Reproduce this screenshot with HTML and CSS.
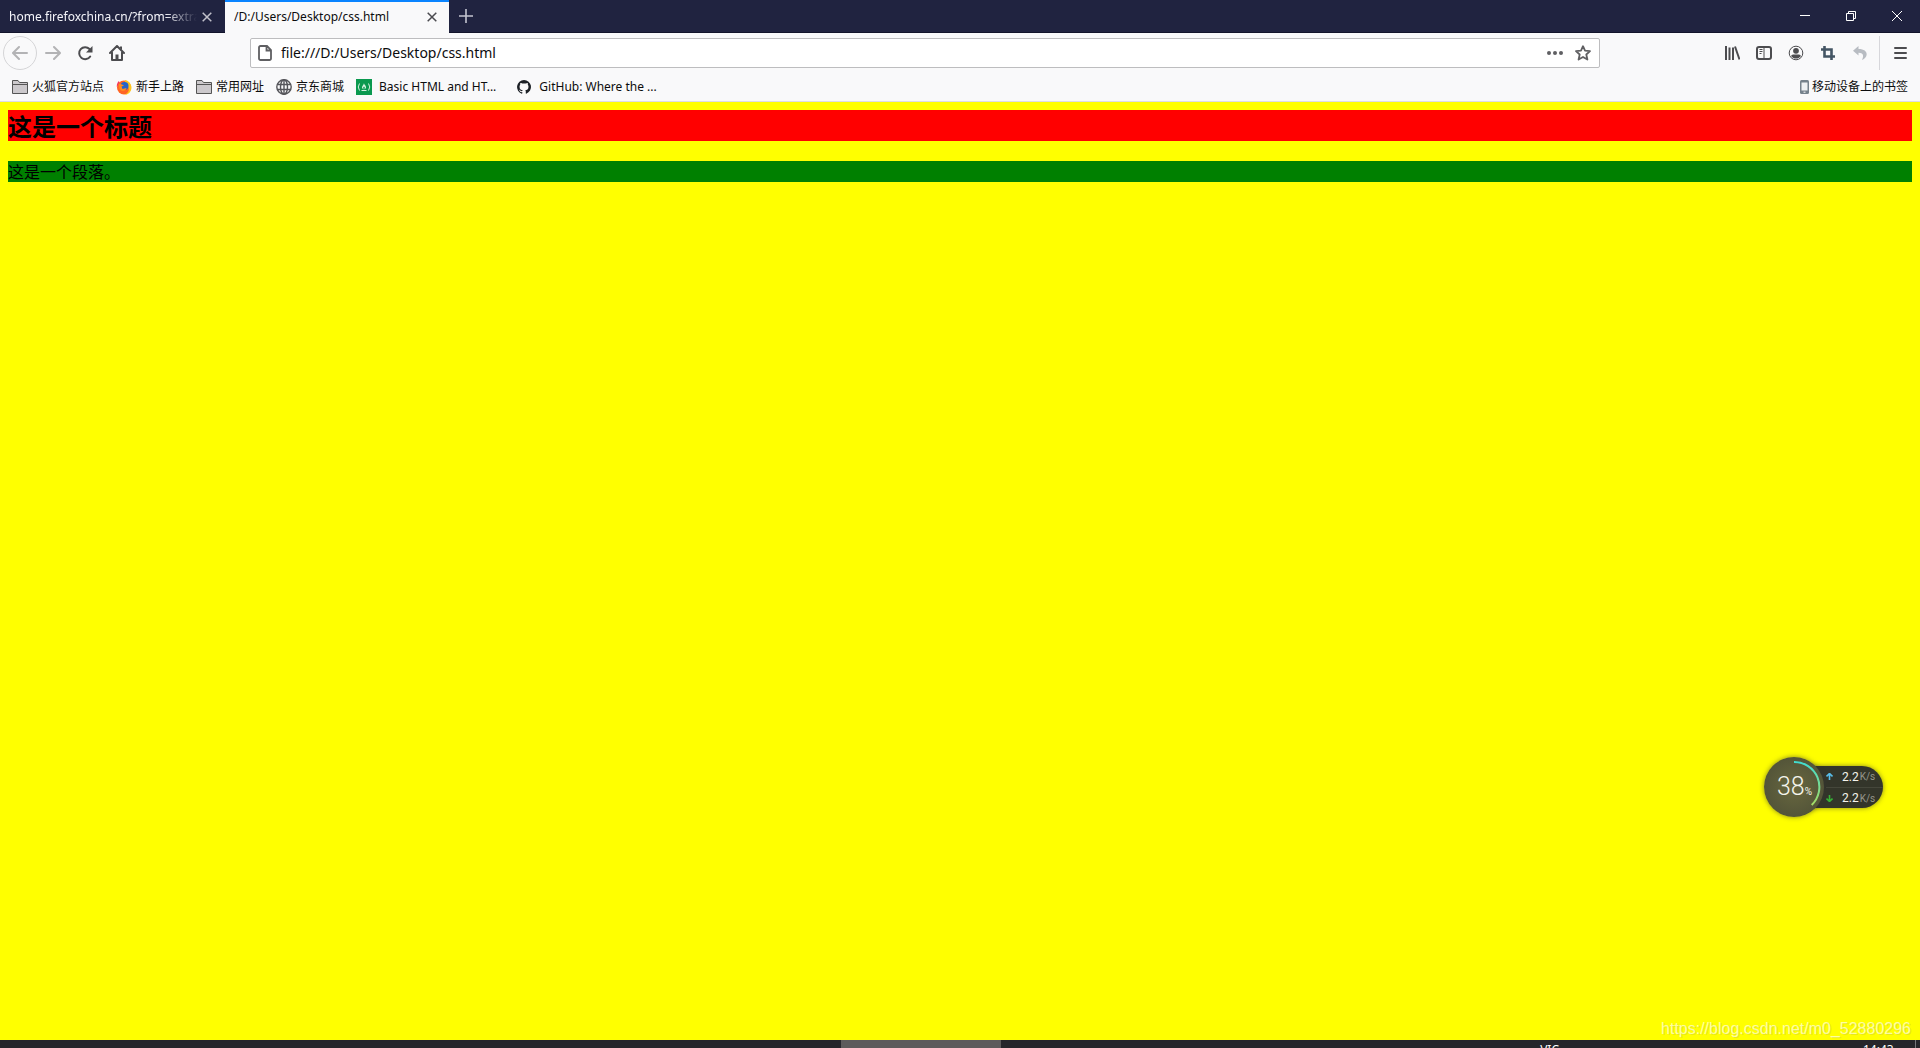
FILE: index.html
```html
<!DOCTYPE html>
<html lang="zh-CN">
<head>
<meta charset="utf-8">
<title>/D:/Users/Desktop/css.html</title>
<link rel="stylesheet" href="styles.css">
</head>
<body>
<header class="chrome">
  <div class="tabbar">
    <div class="tab">
      <span class="tab-title fade">home.firefoxchina.cn/?from=extra</span>
      <button class="tab-close" aria-label="关闭标签页"><svg width="10" height="10" viewBox="0 0 10 10"><path d="M.7.7l8.6 8.6M9.3.7L.7 9.3" stroke="currentColor" stroke-width="1.5"/></svg></button>
    </div>
    <div class="tab active">
      <span class="tab-title">/D:/Users/Desktop/css.html</span>
      <button class="tab-close" aria-label="关闭标签页"><svg width="10" height="10" viewBox="0 0 10 10"><path d="M.7.7l8.6 8.6M9.3.7L.7 9.3" stroke="currentColor" stroke-width="1.5"/></svg></button>
    </div>
    <button class="new-tab" aria-label="新建标签页"><svg width="14" height="14" viewBox="0 0 14 14"><path d="M7 0v14M0 7h14" stroke="currentColor" stroke-width="1.6"/></svg></button>
    <div class="window-controls">
      <button aria-label="最小化"><svg width="10" height="10" viewBox="0 0 10 10"><path d="M0 4.5h10" stroke="currentColor"/></svg></button>
      <button aria-label="还原"><svg width="10" height="10" viewBox="0 0 10 10"><path d="M.5 2.500h7v7h-7zM2.500 2.500v-2h7v7h-2" fill="none" stroke="currentColor"/></svg></button>
      <button aria-label="关闭"><svg width="10" height="10" viewBox="0 0 10 10"><path d="M0 0l10 10M10 0L0 10" stroke="currentColor"/></svg></button>
    </div>
  </div>
  <nav class="toolbar">
    <button class="tool back" aria-label="后退"><svg width="16" height="16" viewBox="0 0 16 16"><path d="M15 8H1.500M7 2L1 8l6 6" fill="none" stroke="currentColor" stroke-width="2" stroke-linecap="round" stroke-linejoin="round"/></svg></button>
    <button class="tool dim" aria-label="前进"><svg width="16" height="16" viewBox="0 0 16 16"><path d="M1 8h13.500M9 2l6 6-6 6" fill="none" stroke="currentColor" stroke-width="2" stroke-linecap="round" stroke-linejoin="round"/></svg></button>
    <button class="tool" aria-label="刷新"><svg width="16" height="16" viewBox="0 0 16 16"><path d="M13.200 11.500A6 6 0 1 1 12.500 4" fill="none" stroke="currentColor" stroke-width="2" stroke-linecap="round"/><path d="M15.500 1v6.500H9z" fill="currentColor"/></svg></button>
    <button class="tool" aria-label="主页"><svg width="16" height="16" viewBox="0 0 16 16"><path d="M1 8l7-7 7 7M3 7.500V15h10V7.500" fill="none" stroke="currentColor" stroke-width="2" stroke-linecap="round" stroke-linejoin="round"/><path d="M6.500 15v-5.500h3V15M11 1.500h2V5l-2-2z" fill="currentColor"/></svg></button>
    <form class="urlbar">
      <svg width="16" height="16" viewBox="0 0 16 16"><path d="M3.500 1H10l4 4v8.500a1.500 1.500 0 0 1-1.500 1.500h-9A1.500 1.500 0 0 1 2 13.500v-11A1.500 1.500 0 0 1 3.500 1zM9.500 1v4.500H14" fill="none" stroke="currentColor" stroke-width="1.800"/></svg>
      <input type="text" value="file:///D:/Users/Desktop/css.html" aria-label="地址">
      <button type="button" aria-label="页面操作"><svg width="16" height="16" viewBox="0 0 16 16"><g fill="currentColor"><circle cx="2" cy="8" r="2"/><circle cx="8" cy="8" r="2"/><circle cx="14" cy="8" r="2"/></g></svg></button>
      <button type="button" aria-label="添加书签"><svg width="16" height="16" viewBox="0 0 16 16"><path d="M8 1.200l2 4.500 5 .5-3.700 3.300 1.100 5L8 12l-4.400 2.500 1.100-5L1 6.200l5-.5z" fill="none" stroke="currentColor" stroke-width="1.800" stroke-linejoin="round"/></svg></button>
    </form>
    <div class="tools">
      <button class="tool" aria-label="书库"><svg width="16" height="16" viewBox="0 0 16 16"><path d="M2 1v14M5.500 2.500V15M9 2.500V15" stroke="currentColor" stroke-width="2"/><path d="M11 1.500l4.500 13" stroke="currentColor" stroke-width="2"/></svg></button>
      <button class="tool" aria-label="侧栏"><svg width="16" height="16" viewBox="0 0 16 16"><rect x="1" y="2" width="14" height="12" rx="2" fill="none" stroke="currentColor" stroke-width="2"/><path d="M8 2v12M3.500 4.500h3M3.500 6.500h3M3.500 8.500h2" stroke="currentColor"/></svg></button>
      <button class="tool" aria-label="账户"><svg width="16" height="16" viewBox="0 0 16 16"><circle cx="8" cy="8" r="6.800" fill="none" stroke="currentColor" stroke-width="1"/><circle cx="8" cy="5.800" r="2.900" fill="currentColor"/><path d="M3 11c1-2 3-1.500 5-1.500s4-.5 5 1.500c-2.500 3.400-7.500 3.400-10 0z" fill="currentColor"/></svg></button>
      <button class="tool crop" aria-label="截图"><svg width="16" height="16" viewBox="0 0 16 16"><path d="M4.500 1v10.500H15M1 4.500h10.500V15" fill="none" stroke="currentColor" stroke-width="2.600"/></svg></button>
      <button class="tool undo" aria-label="撤销"><svg width="16" height="16" viewBox="0 0 16 16"><path d="M6.500 1L1 5.800l5.500 4.700V7.700c4 0 6 2 3.500 7.300 6.500-2.500 7-11-3.500-11z" fill="currentColor"/></svg></button>
      <button class="tool menu" aria-label="菜单"><svg width="16" height="16" viewBox="0 0 16 16"><path d="M3 3h11M3 8h11M3 13h11" stroke="currentColor" stroke-width="2" stroke-linecap="round"/></svg></button>
    </div>
  </nav>
  <nav class="bookmarks">
    <a href="#"><svg width="16" height="16" viewBox="0 0 16 16"><path d="M.5 14.500v-13h5.500l1.500 2h8v11z" fill="#ccc9cc" stroke="#555"/><path d="M1 5.500h14" stroke="#555"/></svg>火狐官方站点</a>
    <a href="#"><svg width="16" height="16" viewBox="0 0 16 16"><circle cx="8" cy="8.500" r="7" fill="#ff6524"/><path d="M9 1c2 0 6.500 3 6.500 7.500S12 16 8 16c5-2 6-6 3.500-9S9 3 9 1z" fill="#ffc51b"/><path d="M.8 8C.5 5 2 2.500 3 2l.5 2z" fill="#f4335d"/><circle cx="8.500" cy="7" r="4" fill="#2463c9"/><path d="M2.500 4.500L6 5.500l2 1-2.500 1 1 2.500 4-1c0 2.500-4.500 4.500-7 1z" fill="#ff8c20"/></svg>新手上路</a>
    <a href="#"><svg width="16" height="16" viewBox="0 0 16 16"><path d="M.5 14.500v-13h5.500l1.500 2h8v11z" fill="#ccc9cc" stroke="#555"/><path d="M1 5.500h14" stroke="#555"/></svg>常用网址</a>
    <a href="#"><svg width="16" height="16" viewBox="0 0 16 16"><g fill="none" stroke="#55555a" stroke-width="1.400"><circle cx="8" cy="8" r="7.200"/><ellipse cx="8" cy="8" rx="3.500" ry="7.200"/><path d="M1 5.500h14M1 10.500h14M8 1v14"/></g></svg>京东商城</a>
    <a href="#" class="wide"><svg width="16" height="16" viewBox="0 0 16 16"><path d="M0 0h16v16H0z" fill="#0a994f"/><path d="M3.500 4.500q-2.500 3.500 0 7M12.500 4.500q2.500 3.500 0 7M5.500 11.500h5" fill="none" stroke="#d5f0df"/><path d="M8 4c0 2 2.500 2.500 2 5l-1.500 1.500.3-2L8 7.500l-.8 1 .3 2L6 9c-.5-2 2-3 2-5z" fill="#d5f0df"/></svg>Basic HTML and HT...</a>
    <a href="#" class="wide github"><svg width="16" height="16" viewBox="0 0 16 16"><path fill="#1d2126" d="M8 1a7 7 0 0 0-2.200 13.640c.35.060.48-.15.480-.34v-1.190c-1.950.42-2.360-.94-2.360-.94-.32-.81-.78-1.020-.78-1.020-.64-.43.050-.42.050-.42.700.050 1.070.72 1.070.72.630 1.070 1.640.76 2.040.58.060-.45.240-.76.440-.94-1.550-.17-3.190-.77-3.190-3.460 0-.76.270-1.390.72-1.880-.07-.17-.31-.89.070-1.850 0 0 .59-.19 1.930.72a6.700 6.700 0 0 1 3.500 0c1.340-.91 1.930-.72 1.930-.72.380.96.140 1.680.070 1.850.45.490.72 1.120.72 1.880 0 2.690-1.640 3.280-3.200 3.450.25.220.48.650.48 1.300v1.920c0 .19.120.41.480.34A7 7 0 0 0 8 1z"/></svg>GitHub: Where the ...</a>
    <a href="#" class="mobile"><svg width="9" height="14" viewBox="0 0 9 14"><rect width="9" height="14" rx="1.500" fill="#76828c"/><path d="M1.500 2.500h6v8h-6z" fill="#eef1f3"/><path d="M3.500 12.200h2" stroke="#fff"/></svg>移动设备上的书签</a>
  </nav>
</header>
<main class="page">
  <h1>这是一个标题</h1>
  <p>这是一个段落。</p>
</main>
<aside class="monitor" aria-label="网速">
  <div class="gauge">
    <svg class="arc" width="60" height="60" viewBox="0 0 60 60"><defs><linearGradient id="g" x1="0" y1="0" x2="0" y2="1"><stop offset="0" stop-color="#40dcd0"/><stop offset="1" stop-color="#a5dc62"/></linearGradient></defs><path d="M30 5a25 25 0 0 1 17.700 43" fill="none" stroke="url(#g)" stroke-width="2"/></svg>
    <span class="load">38</span><span class="percent">%</span>
  </div>
  <div class="rates">
    <div class="rate"><svg width="7" height="7" viewBox="0 0 7 7"><path d="M3.500 7V1M.5 3.500l3-3 3 3" fill="none" stroke="#58bdea" stroke-width="1.600"/></svg><span>2.2</span><small>K/s</small></div>
    <div class="rate"><svg width="7" height="7" viewBox="0 0 7 7"><path d="M3.500 0v6M.5 3.500l3 3 3-3" fill="none" stroke="#36b336" stroke-width="1.600"/></svg><span>2.2</span><small>K/s</small></div>
  </div>
</aside>
<div class="watermark">https://blog.csdn.net/m0_52880296</div>
<footer class="taskbar">
  <span class="task"></span>
  <span class="tray">VIC</span>
  <time class="clock">14:43</time>
</footer>
</body>
</html>
```
FILE: styles.css
```css
* { box-sizing: border-box; }

body {
  margin: 0;
  height: 100vh;
  overflow: hidden;
  display: flex;
  flex-direction: column;
  background: #ff0;
  font-family: "Noto Sans", "Noto Sans CJK SC", sans-serif;
  color: #000;
}

button {
  border: 0;
  padding: 0;
  background: none;
  color: inherit;
  display: flex;
  align-items: center;
  justify-content: center;
}

svg { display: block; flex: none; }

.chrome {
  background: #f9f9fa;
  border-bottom: 1px solid #dcdce6;
  font-size: 12px;
}

.tabbar {
  display: flex;
  height: 33px;
  background: #202340;
  border-bottom: 1px solid #12142b;
  color: #f5f5fa;
}

.tab {
  width: 225px;
  height: 33px;
  padding: 0 12px 0 9px;
  display: flex;
  align-items: center;
  gap: 4px;
}

.tab.active {
  width: 224px;
  padding-right: 11px;
  background: #f9f9fa;
  color: #0c0c0d;
  box-shadow: inset 0 2px #0a84ff;
}

.tab-title {
  flex: 1;
  min-width: 0;
  overflow: hidden;
  white-space: nowrap;
  line-height: 20px;
}

.fade {
  -webkit-mask-image: linear-gradient(to left, transparent, #000 32px);
  mask-image: linear-gradient(to left, transparent, #000 32px);
}

.tab-close { width: 12px; height: 20px; color: #c0c0ca; }
.active .tab-close { color: #4a4a4f; }
.new-tab { width: 34px; color: #c4c5d0; }

.window-controls { display: flex; margin-left: auto; }
.window-controls button { width: 46px; color: #fff; }

.toolbar {
  display: flex;
  align-items: center;
  height: 40px;
  padding: 0 3px;
  color: #4c4c4f;
}

.tool { width: 32px; height: 34px; }
.back {
  width: 34px;
  border: 1px solid #d5d5d7;
  border-radius: 50%;
  color: #b3b3b5;
}
.dim { color: #b3b3b5; }

.urlbar {
  display: flex;
  align-items: center;
  flex: 1;
  height: 30px;
  margin: 0 116px 0 117px;
  padding: 0 6px;
  gap: 8px;
  background: #fff;
  border: 1px solid #bdbdbf;
  border-radius: 2px;
  color: #5f5f62;
}

.urlbar input {
  flex: 1;
  border: 0;
  padding: 0;
  background: none;
  font: 14px/20px "Noto Sans", "Noto Sans CJK SC", sans-serif;
  color: #0c0c0d;
}

.urlbar button { width: 20px; height: 20px; }

.tools { display: flex; }
.crop { color: #445564; }
.undo { color: #b8bcc2; }
.menu {
  width: 38px;
  margin-left: 3px;
  padding-left: 2px;
  border-left: 1px solid #d7d7db;
}

.bookmarks {
  display: flex;
  align-items: center;
  height: 28px;
  padding: 0 12px;
  gap: 12px;
}

.bookmarks a {
  display: flex;
  align-items: center;
  gap: 4px;
  color: #0c0c0d;
  text-decoration: none;
  line-height: 20px;
  white-space: nowrap;
}

.bookmarks .wide { gap: 7px; }
.bookmarks .github { margin-left: 8px; }
.bookmarks .mobile { margin-left: auto; gap: 3px; }

.page {
  flex: 1;
  padding: 8px;
  font-family: "Noto Sans CJK SC", sans-serif;
}

.page h1 {
  margin: 0 0 20px;
  background: red;
  font-size: 24px;
  line-height: 31px;
}

.page p {
  margin: 0;
  background: green;
  font-size: 16px;
  line-height: 21px;
}

.monitor {
  position: absolute;
  right: 37px;
  bottom: 231px;
  display: flex;
  align-items: center;
  font-family: Roboto, sans-serif;
}

.gauge {
  position: relative;
  z-index: 1;
  width: 60px;
  height: 60px;
  border-radius: 50%;
  background: radial-gradient(#68673f, #4b4d36);
  box-shadow: 0 0 5px #3339;
  display: flex;
  align-items: baseline;
  padding-left: 13px;
  color: #f4f4ec;
  line-height: 60px;
}

.arc { position: absolute; left: 0; top: 0; }
.load { font-size: 25px; font-weight: 300; }
.percent { font-size: 10px; }

.rates {
  width: 77px;
  height: 42px;
  margin-left: -18px;
  padding-left: 20px;
  border-radius: 0 21px 21px 0;
  background: #33352a;
  box-shadow: 0 0 5px #3339;
}

.rate {
  display: flex;
  align-items: center;
  height: 21px;
  color: #f4f4ec;
  font-size: 12px;
}

.rate + .rate { border-top: 1px solid #45473b; }
.rate span { margin-left: 9px; }
.rate small { margin-left: 1px; font-size: 10px; color: #96978c; }

.watermark {
  position: absolute;
  right: 9px;
  bottom: 9px;
  font: 16px/20px "Liberation Sans", sans-serif;
  color: #ffffffa0;
  text-shadow: 1px 1px 0 #8883;
}

.taskbar {
  display: flex;
  height: 8px;
  overflow: hidden;
  background: #26262b;
  color: #fff;
  font-size: 12px;
  line-height: 20px;
}

.task { width: 160px; margin-left: 841px; background: #5d5b5b; }
.tray { margin-left: auto; margin-right: 304px; }
.clock { width: 53px; margin-right: 4px; border-right: 1px solid #77777c; }
```
